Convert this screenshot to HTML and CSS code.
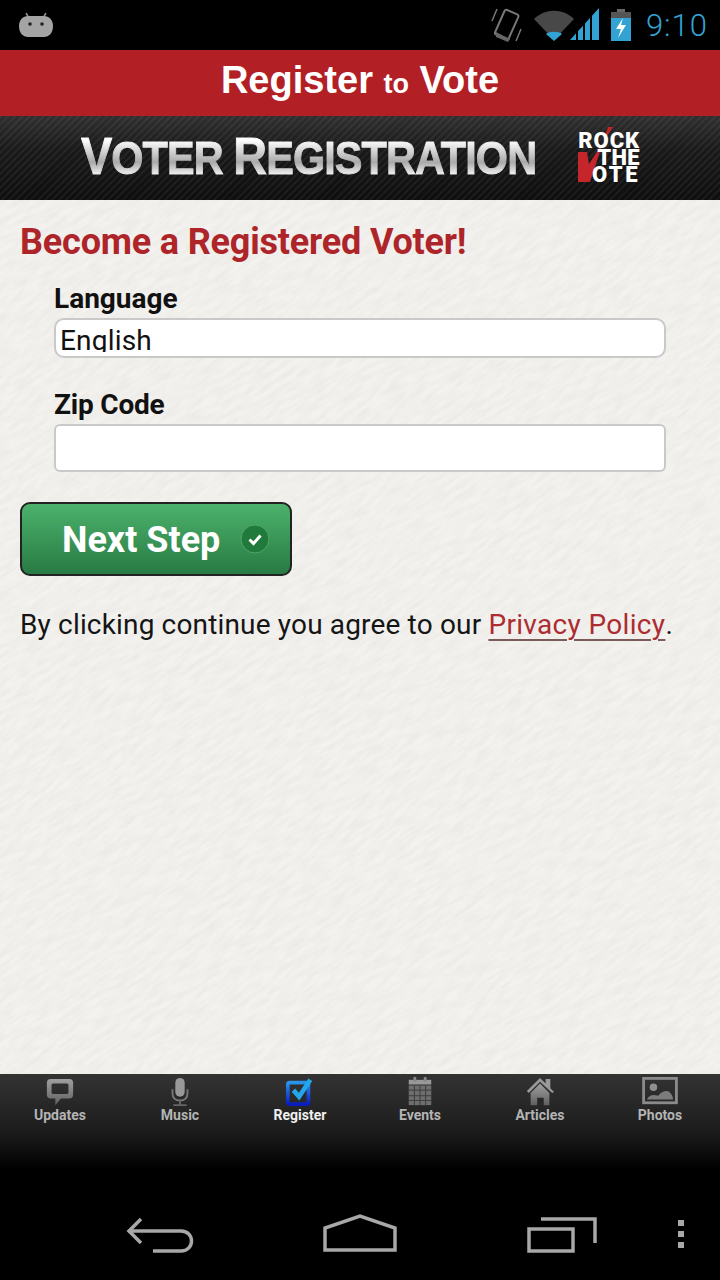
FILE: index.html
```html
<!DOCTYPE html>
<html lang="en">
<head>
<meta charset="utf-8">
<title>Register to Vote</title>
<link rel="stylesheet" href="styles.css">
</head>
<body>
<div class="phone">
  <header class="status">
    <svg class="android" width="36" height="26" viewBox="0 0 36 26"><path d="M8 1l3 5M28 1l-3 5" stroke="#8f8f8f" stroke-width="1.500"/><path d="M10 4h16c5 0 9 4 9 10 0 7-4 11-9 11H10C5 25 1 21 1 14 1 8 5 4 10 4z" fill="#a4a4a4"/><circle cx="12" cy="12" r="1.800" fill="#222"/><circle cx="24" cy="12" r="1.800" fill="#222"/></svg>
    <div class="status-right">
      <svg class="vib" width="31" height="34" viewBox="0 0 31 34"><g fill="none" stroke="#777" stroke-width="2"><rect x="8" y="3" width="15" height="27" rx="2" transform="rotate(24 15.500 17)"/><path d="M6 1L1 13M30 21l-5 12" stroke-width="1.500"/></g><path d="M5 24l14 7-2 3-12-5z" fill="#666"/></svg>
      <svg class="wifi" width="66" height="34" viewBox="0 0 66 34"><path d="M0 11C11 0 29 0 40 11L20 32z" fill="#484848"/><path d="M12 26c3-3 13-3 16 0l-8 7z" fill="#33a3d4"/><path d="M36 32L65 0v32z" fill="#33a3d4"/><path d="M43 33V20M50 33V13M57 33V5" stroke="#000" stroke-width="2"/></svg>
      <svg class="batt" width="20" height="32" viewBox="0 0 20 32"><path d="M6 0h8v3H6z" fill="#666"/><path d="M0 3h20v6H0z" fill="#555"/><path d="M0 9h20v23H0z" fill="#33a3d4"/><path d="M12 9L5 20h5l-3 9 8-13h-5z" fill="#fff"/></svg>
      <span class="clock">9:10</span>
    </div>
  </header>

  <div class="titlebar"><h1>Register <small>to</small> Vote</h1></div>

  <div class="banner">
    <div class="banner-title"><b>V</b>OTER <b>R</b>EGISTRATION</div>
    <div class="rtv">
      <svg class="rtv-mark" width="40" height="58" viewBox="0 0 40 58"><path d="M0 27h9l2 12L35 2l-5 0L12 57H0z" fill="#c4262b"/></svg>
      <span class="rtv-line rtv-rock">ROCK</span>
      <span class="rtv-line rtv-the">THE</span>
      <span class="rtv-line rtv-ote">OTE</span>
    </div>
  </div>

  <main class="content">
    <svg class="paper" width="720" height="874" aria-hidden="true"><filter id="grain"><feTurbulence type="fractalNoise" baseFrequency="0.05 0.22" numOctaves="4" seed="7"/><feColorMatrix values="0 0 0 0 0.55 0 0 0 0 0.54 0 0 0 0 0.52 0.32 0 0 0 -0.1"/></filter><rect x="-300" y="-300" width="1400" height="1500" filter="url(#grain)" transform="rotate(-35 360 437)"/></svg>
    <h2>Become a Registered Voter!</h2>
    <form class="fields">
      <label class="field-label">Language</label>
      <div class="select"><span>English</span></div>
      <label class="field-label field-zip">Zip Code</label>
      <div class="input"></div>
    </form>
    <div class="btn">
      <span>Next Step</span>
      <svg class="btn-icon" width="30" height="30" viewBox="0 0 30 30"><circle cx="15" cy="15" r="14" fill="#1f7a3c" stroke="#4ea968" stroke-width="1"/><path d="M9.500 15.500l4 4 7-8" fill="none" stroke="#fff" stroke-width="3"/></svg>
    </div>
    <p class="legal">By clicking continue you agree to our <a>Privacy Policy</a>.</p>
  </main>

  <nav class="tabs">
    <div class="tab"><svg width="32" height="32" viewBox="0 0 32 32"><defs><linearGradient id="g" x1="0" y1="0" x2="0" y2="1"><stop offset="0" stop-color="#a0a0a0"/><stop offset="1" stop-color="#606060"/></linearGradient></defs><path fill-rule="evenodd" d="M6 2h20c3 0 4 2 4 4v13c0 3-2 4-4 4H17l-6 7v-7H6c-3 0-4-2-4-4V6c0-3 2-4 4-4zm3 5c-2 0-2 1-2 2v7c0 1 0 2 2 2h14c2 0 2-1 2-2V9c0-1 0-2-2-2z" fill="url(#g)"/></svg><span>Updates</span></div>
    <div class="tab"><svg width="32" height="32" viewBox="0 0 32 32"><rect x="11" y="1" width="10" height="20" rx="5" fill="#999"/><path d="M8 13v4c0 5 3 8 8 8s8-3 8-8v-4" fill="none" stroke="#777" stroke-width="2"/><path d="M16 25v4M9 30h14" stroke="#666" stroke-width="2"/></svg><span>Music</span></div>
    <div class="tab tab-active"><svg width="32" height="32" viewBox="0 0 32 32"><defs><linearGradient id="b" x1="0" y1="0" x2="0" y2="1"><stop offset="0" stop-color="#2a93ea"/><stop offset="1" stop-color="#0a1bc0"/></linearGradient></defs><rect x="3" y="6" width="22" height="23" rx="2" fill="none" stroke="url(#b)" stroke-width="4"/><path d="M9 14l6 7L27 3" fill="none" stroke="#22a7ee" stroke-width="5"/></svg><span>Register</span></div>
    <div class="tab"><svg width="32" height="32" viewBox="0 0 32 32"><path d="M4 3h24v5H4z" fill="#999"/><path d="M9 0h3v5H9zM20 0h3v5h-3z" fill="#888"/><path fill="#6e6e6e" d="M4 9h24v21H4z"/><path d="M4 14h24M4 20h24M4 25h24M10 9v21M16 9v21M22 9v21" stroke="#3a3a3a" stroke-width="1"/></svg><span>Events</span></div>
    <div class="tab"><svg width="32" height="32" viewBox="0 0 32 32"><path d="M2 15L16 1l6 6V2h5v10l4 4-2 1-13-12L4 17z" fill="#999"/><path fill-rule="evenodd" d="M6 17L16 7l10 10v13H6zm7 5v8h7v-8z" fill="url(#g)"/></svg><span>Articles</span></div>
    <div class="tab"><svg width="38" height="32" viewBox="0 0 38 32"><rect x="1.500" y="1.500" width="35" height="26" fill="none" stroke="#8a8a8a" stroke-width="3"/><circle cx="12" cy="11" r="4" fill="#8f8f8f"/><path d="M5 24c3-6 8-5 12-4 4-5 10-7 13-3 2 2 3 5 3 7z" fill="#7c7c7c"/></svg><span>Photos</span></div>
  </nav>

  <footer class="navbar">
    <svg class="nav-back" width="68" height="36" viewBox="0 0 68 36"><path d="M15 2L3 14l12 12M3 14h52c14 0 14 20 0 20H27" fill="none" stroke="#a8a8a8" stroke-width="3.500"/></svg>
    <svg class="nav-home" width="74" height="38" viewBox="0 0 74 38"><path d="M2 36V14L37 2l35 12v22z" fill="none" stroke="#a8a8a8" stroke-width="3.500"/></svg>
    <svg class="nav-recent" width="70" height="36" viewBox="0 0 70 36"><path d="M2 12h44v22H2zM14 2h54v24" fill="none" stroke="#a8a8a8" stroke-width="3.500"/></svg>
    <div class="nav-menu"><i></i><i></i><i></i></div>
  </footer>
</div>
</body>
</html>
```

FILE: styles.css
```css
* { box-sizing: border-box; }
html, body { margin: 0; padding: 0; background: #000; }
.phone { width: 720px; height: 1280px; display: flex; flex-direction: column; overflow: hidden; font-family: Roboto, "Liberation Sans", sans-serif; }

.status { height: 50px; background: #000; display: flex; align-items: center; justify-content: space-between; padding: 0 12px 0 18px; flex: none; }
.status-right { display: flex; align-items: center; }
.vib { margin-right: 12px; }
.wifi { margin-right: 11px; }
.batt { margin-right: 15px; }
.clock { font-size: 31px; color: #33a3d4; font-weight: 300; letter-spacing: 1px; }

.titlebar { height: 66px; background: #b22025; flex: none; display: flex; justify-content: center; align-items: center; padding-bottom: 6px; }
.titlebar h1 { margin: 0; color: #fff; font: bold 38px/1 "Liberation Sans", sans-serif; }
.titlebar small { font-size: 27px; }

.banner { height: 84px; flex: none; display: flex; align-items: center; background: repeating-linear-gradient(135deg, rgba(255,255,255,.05) 0 2px, transparent 2px 5px), linear-gradient(#303030, #1a1a1a 40%, #0e0e0e); padding: 0 0 4px 81px; position: relative; }
.banner-title { font: bold 46px/1 "Liberation Sans", sans-serif; letter-spacing: -1px; background: linear-gradient(#fdfdfd 20%, #a9a9a9 62%, #efefef 85%); -webkit-background-clip: text; background-clip: text; color: transparent; -webkit-text-stroke: 1px transparent; white-space: nowrap; transform: scaleX(.9); transform-origin: left center; }
.banner-title b { font-size: 52px; }
.rtv { position: absolute; left: 578px; top: 9px; width: 64px; height: 62px; color: #fff; font: 900 22px/16px Roboto, sans-serif; }
.rtv-mark { position: absolute; left: 0; top: 0; }
.rtv-line { position: absolute; right: 2px; white-space: nowrap; }
.rtv-rock { top: 8px; letter-spacing: .9px; }
.rtv-the { top: 25px; letter-spacing: .4px; }
.rtv-ote { top: 42px; letter-spacing: 2.500px; }

.content { flex: 1; position: relative; background: #f3f2ef; padding: 21px 20px 0; overflow: hidden; }
.paper { position: absolute; left: 0; top: 0; }
.content > *:not(.paper) { position: relative; }
.content h2 { margin: 0; color: #ad2429; font-size: 36px; line-height: 43px; font-weight: 700; letter-spacing: -.18px; }
.fields { margin: 19px 34px 0; display: flex; flex-direction: column; }
.field-label { font-size: 28px; line-height: 32px; font-weight: 700; color: #111; height: 32px; }
.field-zip { margin-top: 31px; letter-spacing: -.2px; }
.select { margin-top: 3px; height: 40px; background: #fff; border: 2px solid #c9c9c9; border-radius: 10px; padding: 0 4px; overflow: hidden; font-size: 28px; line-height: 42px; color: #111; }
.select span { display: block; height: 32px; overflow: hidden; letter-spacing: .2px; }
.input { margin-top: 3px; height: 48px; background: #fff; border: 2px solid #c9c9c9; border-radius: 6px; }
.btn { margin-top: 30px; width: 272px; height: 74px; border: 2px solid #222; border-radius: 10px; background: linear-gradient(#4cb26c, #287a43); display: flex; align-items: center; justify-content: space-between; padding: 2px 20px 0 40px; color: #fff; font-size: 36px; font-weight: 700; }
.btn-icon { flex: none; margin-top: -2px; }
.legal { margin: 31px 0 0; font-size: 28px; line-height: 36px; color: #151515; white-space: nowrap; letter-spacing: .16px; }
.legal a { color: #ad2c31; letter-spacing: .33px; text-decoration: underline #7d5a5a 2px; text-underline-offset: 5px; }

.tabs { height: 96px; flex: none; display: flex; background: linear-gradient(#333 0, #1c1c1c 60%, #000 100%); padding-top: 3px; }
.tab { flex: 1; display: flex; flex-direction: column; align-items: center; color: #b4b4b4; font-size: 14px; line-height: 16px; font-weight: 700; }
.tab svg { height: 30px; display: block; }
.tab-active { color: #f0f0f0; }

.navbar { height: 110px; background: #000; flex: none; position: relative; }
.nav-back { position: absolute; left: 126px; top: 47px; }
.nav-home { position: absolute; left: 323px; top: 44px; }
.nav-recent { position: absolute; left: 527px; top: 47px; }
.nav-menu { position: absolute; left: 678px; top: 50px; display: flex; flex-direction: column; gap: 5px; }
.nav-menu i { width: 6px; height: 6px; background: #a8a8a8; display: block; }
```
